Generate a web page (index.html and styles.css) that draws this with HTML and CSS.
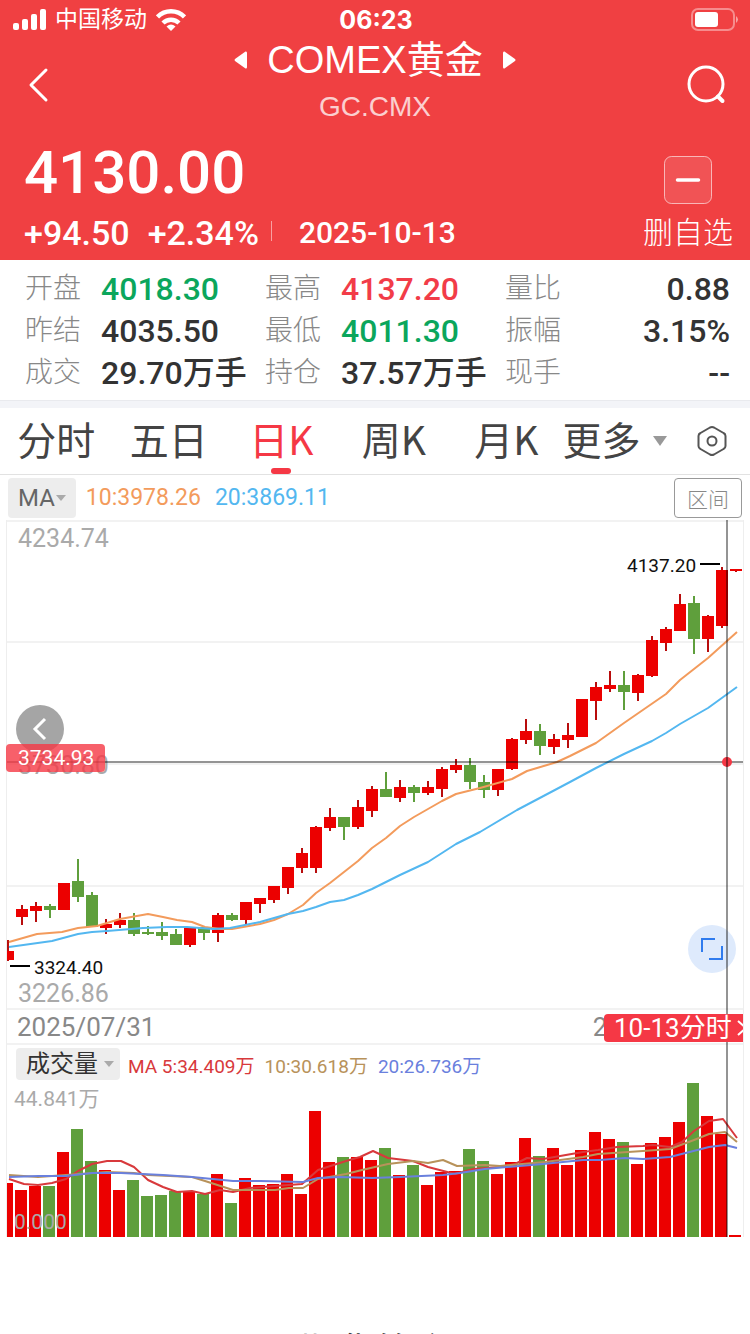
FILE: index.html
```html
<!DOCTYPE html>
<html lang="zh">
<head>
    <meta charset="UTF-8">
    <meta name="viewport" content="width=device-width, initial-scale=1">
    <title>COMEX黄金</title>
    <link rel="stylesheet" href="styles.css">
    <script src="script.js" defer></script>
</head>
<body>
    <header class="header">
        <div class="status">
            <div class="carrier">
                <svg width="33" height="22" viewBox="0 0 33 22" fill="#fff">
                    <rect x="0" y="14" width="6" height="7" rx="2"/>
                    <rect x="9" y="10" width="6" height="11" rx="2"/>
                    <rect x="18" y="5" width="6" height="16" rx="2"/>
                    <rect x="27" y="0" width="6" height="21" rx="2"/>
                </svg>
                <span>中国移动</span>
                <svg width="30" height="22" viewBox="0 0 30 22" fill="none" stroke="#fff" stroke-width="4.500">
                    <path d="M1.500 8a19 19 0 0 1 27 0"/>
                    <path d="M7 14a11.500 11.500 0 0 1 16 0"/>
                    <path d="M10.500 17.500q4.500-4 9 0L15 22z" fill="#fff" stroke="none"/>
                </svg>
            </div>
            <span class="time">06:23</span>
            <svg class="battery" width="48" height="24" viewBox="0 0 48 24">
                <rect x="1" y="1" width="42" height="21" rx="6" fill="none" stroke="#fff" stroke-opacity=".4" stroke-width="2"/>
                <rect x="4" y="4" width="23" height="15" rx="3" fill="#fff"/>
                <path d="M45 8q4 3.500 0 7z" fill="#fff" fill-opacity=".5"/>
            </svg>
        </div>
        <div class="nav">
            <button class="icon-btn" aria-label="返回">
                <svg width="22" height="36" viewBox="0 0 22 36" fill="none" stroke="#fff" stroke-width="3" stroke-linecap="round" stroke-linejoin="round">
                    <path d="M19 3L4 18l15 15"/>
                </svg>
            </button>
            <div class="title">
                <div class="name">
                    <button class="icon-btn" aria-label="上一个">
                        <svg width="14" height="20" viewBox="0 0 14 20" fill="#fff"><path d="M1 9L11.500 1.500Q13 1 13 3v14q0 2-1.500 1.500L1 11q-1-1 0-2z"/></svg>
                    </button>
                    <h1>COMEX黄金</h1>
                    <button class="icon-btn" aria-label="下一个">
                        <svg width="14" height="20" viewBox="0 0 14 20" fill="#fff"><path d="M13 9L2.500 1.500Q1 1 1 3v14q0 2 1.500 1.500L13 11q1-1 0-2z"/></svg>
                    </button>
                </div>
                <p class="code">GC.CMX</p>
            </div>
            <button class="icon-btn search" aria-label="搜索">
                <svg width="40" height="40" viewBox="0 0 40 40" fill="none" stroke="#fff" stroke-width="3" stroke-linecap="round">
                    <circle cx="20" cy="19" r="17"/>
                    <path d="M32 31.500L36.500 36" stroke-width="4"/>
                </svg>
            </button>
        </div>
        <div class="quote">
            <div>
                <div class="price">4130.00</div>
                <div class="change">
                    <span>+94.50</span>
                    <span>+2.34%</span>
                    <time datetime="2025-10-13">2025-10-13</time>
                </div>
            </div>
            <button class="remove">
                <svg width="48" height="48" viewBox="0 0 48 48">
                    <rect x=".5" y=".5" width="47" height="47" rx="7" fill="#fff" fill-opacity=".1" stroke="#fff" stroke-opacity=".6"/>
                    <path d="M13.500 24h21" stroke="#fff" stroke-width="3.500" stroke-linecap="round"/>
                </svg>
                <span>删自选</span>
            </button>
        </div>
    </header>

    <dl class="info">
        <div><dt>开盘</dt><dd class="down">4018.30</dd></div>
        <div><dt>最高</dt><dd class="up">4137.20</dd></div>
        <div><dt>量比</dt><dd>0.88</dd></div>
        <div><dt>昨结</dt><dd>4035.50</dd></div>
        <div><dt>最低</dt><dd class="down">4011.30</dd></div>
        <div><dt>振幅</dt><dd>3.15%</dd></div>
        <div><dt>成交</dt><dd>29.70万手</dd></div>
        <div><dt>持仓</dt><dd>37.57万手</dd></div>
        <div><dt>现手</dt><dd>--</dd></div>
    </dl>

    <nav class="tabs">
        <button class="tab">分时</button>
        <button class="tab">五日</button>
        <button class="tab active">日K</button>
        <button class="tab">周K</button>
        <button class="tab">月K</button>
        <button class="more">更多
            <svg width="14" height="10" viewBox="0 0 14 10" fill="#999"><path d="M0 0h14L7 10z"/></svg>
        </button>
        <button class="icon-btn setting" aria-label="设置">
            <svg width="30" height="32" viewBox="0 0 30 32" fill="none" stroke="#555" stroke-width="2" stroke-linejoin="round">
                <path d="M13 2.500q2-1 4 0l9.500 5.500q2 1 2 3v10q0 2-2 3L17 29.500q-2 1-4 0L3.500 24q-2-1-2-3V11q0-2 2-3z"/>
                <circle cx="15" cy="16" r="4.500"/>
            </svg>
        </button>
    </nav>

    <main>
        <div class="toolbar">
            <button class="select">MA<svg width="10" height="6" viewBox="0 0 10 6" fill="#aaa"><path d="M0 0h10L5 6z"/></svg></button>
            <span class="ma10">10:3978.26</span>
            <span class="ma20">20:3869.11</span>
            <button class="range">区间</button>
        </div>
        <div class="chart">
            <div class="pane">
                <svg id="kline" viewBox="7 520 736 488" role="img" aria-label="日K线">
                    <g stroke="#f2f2f2" stroke-width="2">
                        <path d="M7 521h736M7 642h736M7 764h736M7 886h736"/>
                    </g>
                    <g class="axis">
                        <text x="18" y="547">4234.74</text>
                        <text x="18" y="774">3730.80</text>
                        <text x="18" y="1002">3226.86</text>
                    </g>
                    <g id="candles"></g>
                    <g id="maLines"></g>
                    <path d="M7 762h736" stroke="#000" stroke-opacity=".42" stroke-width="2"/>
                    <path d="M700 564h20M10 966h20" stroke="#000" stroke-width="2"/>
                    <g class="mark">
                        <text x="627" y="572">4137.20</text>
                        <text x="34" y="974">3324.40</text>
                    </g>
                </svg>
                <button class="prev" aria-label="向前">
                    <svg width="48" height="48" viewBox="0 0 48 48" fill="none" stroke="#fff" stroke-width="3"><path d="M29 14L19 24l10 10"/></svg>
                </button>
                <span class="price-tag">3734.93</span>
                <button class="expand" aria-label="全屏">
                    <svg width="48" height="48" viewBox="0 0 48 48" fill="none" stroke="#2f7bee" stroke-width="2"><path d="M27 14H14v13M21 34h13V21"/></svg>
                </button>
            </div>
            <div class="dates">
                <span>2025/07/31</span>
                <span>2025/10/13</span>
                <a class="date-tag" href="#">10-13分时<svg width="12" height="16" viewBox="0 0 12 16" fill="none" stroke="#fff" stroke-width="2"><path d="M1 1l8 7-8 7"/></svg></a>
            </div>
            <div class="vol-head">
                <button class="select">成交量<svg width="10" height="6" viewBox="0 0 10 6" fill="#aaa"><path d="M0 0h10L5 6z"/></svg></button>
                <span class="v5">MA 5:34.409万</span>
                <span class="v10">10:30.618万</span>
                <span class="v20">20:26.736万</span>
            </div>
            <svg id="volume" viewBox="7 1083 736 154" role="img" aria-label="成交量">
                <g id="bars"></g>
                <g id="volLines"></g>
                <g class="axis small">
                    <text x="14" y="1106">44.841万</text>
                    <text x="14" y="1229">0.000</text>
                </g>
            </svg>
            <div class="crosshair"></div>
        </div>
        <h2 class="intro">期货简介</h2>
    </main>
</body>
</html>
```
FILE: styles.css
```css
*{
    box-sizing: border-box;
}
body,h1,h2,p,dl,dd{
    margin: 0;
    padding: 0;
    font-weight: 400;
}
body{
    height: 100vh;
    overflow: hidden;
    background-color: #fff;
    color: #333;
    font-family: Roboto, "Noto Sans CJK SC", sans-serif;
}
button{
    border: 0;
    padding: 0;
    margin: 0;
    background: none;
    color: inherit;
    font: inherit;
    cursor: pointer;
}
svg{
    display: block;
}
/* 顶部 */
.header{
    height: 260px;
    background-color: #f04042;
    color: #fff;
}
.status{
    display: grid;
    grid-template-columns: 1fr auto 1fr;
    align-items: center;
    height: 40px;
    padding: 0 11px 0 13px;
}
.carrier{
    display: flex;
    align-items: center;
    gap: 9px;
    font-size: 23px;
    line-height: 40px;
}
.time{
    font-family: Inter, sans-serif;
    font-size: 25px;
    font-weight: 700;
}
.battery{
    justify-self: end;
}
.nav{
    display: grid;
    grid-template-columns: 100px 1fr 100px;
    align-items: center;
    height: 90px;
}
.nav > .icon-btn{
    padding-left: 27px;
    justify-self: start;
}
.nav > .search{
    padding: 0 24px 0 0;
    justify-self: end;
}
.title{
    padding-bottom: 8px;
}
.name{
    display: flex;
    justify-content: center;
    align-items: center;
    gap: 19px;
}
.name h1{
    font-family: "Liberation Sans", "Noto Sans CJK SC", sans-serif;
    font-size: 38px;
    line-height: 40px;
}
.code{
    margin-top: 12px;
    font-family: "Liberation Sans", sans-serif;
    font-size: 28px;
    line-height: 30px;
    text-align: center;
    opacity: .75;
}
.quote{
    display: flex;
    justify-content: space-between;
    padding: 10px 17px 0 24px;
}
.price{
    font-size: 60px;
    font-weight: 500;
    line-height: 66px;
}
.change{
    display: flex;
    align-items: center;
    gap: 18px;
    margin-top: 7px;
    font-size: 34px;
    font-weight: 500;
    line-height: 40px;
}
.change time{
    position: relative;
    padding-left: 22px;
    font-size: 30px;
}
.change time::before{
    content: "";
    position: absolute;
    left: -6px;
    top: 8px;
    width: 1px;
    height: 20px;
    background-color: rgba(255,255,255,.5);
}
.remove{
    display: flex;
    flex-direction: column;
    align-items: center;
    gap: 9px;
    padding-top: 16px;
    align-self: flex-start;
    font-size: 30px;
    font-weight: 300;
    line-height: 40px;
}
/* 行情数据 */
.info{
    display: grid;
    grid-template-columns: 240fr 240fr 225fr;
    padding: 8px 20px 6px 25px;
    border-bottom: 1px solid #e9eaee;
}
.info div{
    display: flex;
    line-height: 42px;
    height: 42px;
    white-space: nowrap;
}
.info dt{
    flex: 0 0 76px;
    font-size: 28px;
    font-weight: 300;
    color: #888;
}
.info dd{
    font-size: 32px;
    font-weight: 500;
}
.info div:nth-child(3n) dd{
    margin-left: auto;
}
.info .up{
    color: #f23c48;
}
.info .down{
    color: #0ba65c;
}
/* 周期切换 */
.tabs{
    display: flex;
    height: 74px;
    border-top: 7px solid #f3f4f8;
    border-bottom: 1px solid #e2e2e2;
    font-family: "Noto Sans CJK SC", sans-serif;
    font-size: 39px;
    line-height: 60px;
    color: #444;
}
.tab{
    position: relative;
    flex: 0 0 15%;
    padding-bottom: 6px;
}
.active{
    color: #f53845;
}
.active::after{
    content: "";
    position: absolute;
    left: 50%;
    bottom: 0;
    width: 20px;
    height: 6px;
    margin-left: -10px;
    border-radius: 3px;
    background-color: #f53845;
}
.more{
    display: flex;
    align-items: center;
    gap: 12px;
    padding-bottom: 6px;
}
.more svg{
    margin-top: 6px;
}
.setting{
    margin: 0 23px 0 auto;
}
/* K线图 */
.toolbar{
    display: flex;
    align-items: center;
    gap: 14px;
    height: 45px;
    padding: 0 8px;
    font-size: 23px;
}
.select{
    display: flex;
    align-items: center;
    border-radius: 4px;
    background-color: #ededed;
}
.toolbar .select{
    gap: 1px;
    height: 40px;
    padding: 0 10px;
    margin-right: -4px;
    font-size: 24px;
    color: #666;
}
.ma10{
    color: #f39b5c;
}
.ma20{
    color: #53b7f0;
}
.range{
    width: 68px;
    height: 40px;
    margin-left: auto;
    border: 1px solid #999;
    border-radius: 4px;
    font-size: 21px;
    font-weight: 300;
    color: #888;
}
.chart{
    position: relative;
    margin: 0 6px;
    border: 1px solid #eee;
    border-width: 0 1px;
}
.pane{
    position: relative;
}
.chart > svg,.pane > svg{
    width: 100%;
    height: auto;
}
.axis{
    font-size: 25px;
    fill: #aaa;
}
.small{
    font-size: 21px;
}
.mark{
    font-size: 19px;
    fill: #111;
}
.prev,.expand{
    position: absolute;
    width: 48px;
    height: 48px;
    border-radius: 50%;
}
.prev{
    left: 9px;
    top: 38%;
    background-color: #a5a5a5;
}
.expand{
    right: 7px;
    top: 83%;
    background-color: rgba(47,123,238,.16);
}
.price-tag{
    position: absolute;
    left: -1px;
    top: 46%;
    width: 99px;
    padding-left: 12px;
    border-radius: 4px;
    background-color: rgba(245,56,69,.8);
    color: #fff;
    font-size: 21px;
    line-height: 28px;
}
.dates{
    position: relative;
    display: flex;
    justify-content: space-between;
    height: 37px;
    padding: 0 12px 0 10px;
    border-top: 2px solid #f2f2f2;
    border-bottom: 2px solid #f2f2f2;
    overflow: hidden;
    font-size: 26px;
    line-height: 35px;
    color: #888;
}
.date-tag{
    position: absolute;
    right: 0;
    top: 4px;
    z-index: 2;
    display: flex;
    align-items: center;
    gap: 5px;
    width: 139px;
    height: 28px;
    padding-left: 10px;
    overflow: hidden;
    border-radius: 4px 0 0 4px;
    background-color: #f53845;
    color: #fff;
    line-height: 28px;
    white-space: nowrap;
    text-decoration: none;
}
.date-tag svg{
    flex: none;
}
.vol-head{
    display: flex;
    align-items: center;
    gap: 10px;
    height: 38px;
    padding: 0 9px;
    font-size: 19px;
}
.vol-head .select{
    gap: 6px;
    height: 32px;
    padding: 0 6px 0 10px;
    margin-right: -2px;
    font-size: 24px;
    line-height: 32px;
}
.v5{
    color: #d8393c;
}
.v10{
    color: #b8925a;
}
.v20{
    color: #6a80dd;
}
.crosshair{
    position: absolute;
    right: 15px;
    top: 0;
    bottom: 0;
    width: 2px;
    background-color: rgba(0,0,0,.42);
}
.intro{
    margin-top: 87px;
    font-size: 38px;
    line-height: 56px;
    text-align: center;
}
```
FILE: script.js
```js
// 颜色, 最高, 实体上沿, 实体下沿, 最低
var candles = [
    ["r",940,951,960,961],["r",905,909,917,925],["r",902,906,911,922],["g",904,906,910,918],
    ["r",883,883,910,910],["g",859,881,897,902],["g",892,895,927,927],["r",919,924,928,934],
    ["r",913,920,925,928],["g",913,920,934,936],["g",926,932,934,935],["g",922,932,936,940],
    ["g",929,934,945,945],["r",927,928,945,947],["g",927,927,933,940],["r",913,915,933,942],
    ["g",913,915,920,921],["r",902,902,920,924],["r",898,898,904,913],["r",886,886,900,903],
    ["r",867,867,888,894],["r",848,853,868,873],["r",826,827,868,873],["r",808,817,828,831],
    ["g",817,817,827,840],["r",800,807,827,829],["r",786,789,811,817],["g",772,789,797,797],
    ["r",780,787,798,802],["g",785,787,793,802],["r",781,787,793,795],["r",767,769,789,797],
    ["r",759,765,770,773],["g",758,765,782,789],["g",775,782,790,798],["r",769,769,790,796],
    ["r",738,739,769,770],["r",719,731,740,744],["g",724,731,746,755],["r",734,739,747,754],
    ["r",723,735,740,748],["r",699,699,737,737],["r",682,687,701,720],["r",671,685,689,692],
    ["g",671,685,692,710],["r",674,675,693,701],["r",636,640,676,677],["r",627,629,643,651],
    ["r",594,604,631,631],["g",596,603,639,654],["r",615,616,639,652],["r",567,570,626,628],
    ["r",569,569,571,572]
];
// 成交量柱的上沿
var volumes = [
    1183,1190,1186,1186,1152,1129,1161,1170,1190,1180,1196,1195,1191,1191,1194,1174,1203,1178,
    1185,1184,1174,1194,1111,1162,1157,1157,1160,1148,1175,1165,1185,1172,1171,1149,1161,1174,
    1162,1138,1156,1148,1165,1150,1132,1139,1142,1164,1143,1137,1122,1083,1116,1134,1235
];
var ma10 = "9,942 37,934 62,932 78,928 97,926 120,919 148,914 163,917 177,920 192,922 205,927 220,929 232,929 260,924 274,920 288,914 303,905 316,893 330,883 358,861 372,848 386,838 400,826 414,817 428,809 442,801 456,794 480,788 512,779 527,771 557,762 570,756 596,743 624,723 666,694 680,680 694,669 708,658 737,632";
var ma20 = "9,947 52,941 78,934 92,932 107,931 143,928 167,927 187,927 213,929 230,928 260,922 288,914 303,911 316,907 330,902 344,900 358,895 372,889 400,875 428,862 442,853 456,844 480,832 517,810 553,791 570,782 596,768 624,754 652,741 666,733 680,724 708,708 737,687";
var vol5 = "9,1179 24,1184 38,1185 52,1183 66,1179 78,1171 92,1164 107,1161 121,1161 134,1167 148,1180 163,1187 177,1192 192,1191 205,1194 220,1190 233,1192 250,1188 275,1186 302,1184 318,1170 346,1161 360,1157 373,1151 388,1158 413,1161 428,1167 455,1174 473,1169 500,1167 515,1164 527,1158 543,1159 583,1152 598,1150 617,1147 643,1146 653,1145 670,1147 682,1142 694,1131 709,1121 723,1119 737,1138";
var vol10 = "9,1175 38,1177 66,1175 107,1172 134,1173 148,1175 192,1177 205,1181 233,1190 275,1190 289,1188 303,1188 318,1179 346,1174 362,1170 388,1164 413,1161 428,1163 443,1160 457,1166 485,1165 500,1166 545,1162 583,1157 598,1154 643,1151 670,1149 694,1140 709,1134 725,1132 737,1142";
var vol20 = "9,1177 38,1176 66,1176 92,1173 121,1173 163,1175 192,1177 233,1181 260,1181 303,1182 318,1178 340,1177 372,1178 400,1177 443,1175 460,1173 485,1169 543,1164 583,1160 600,1160 625,1158 643,1159 670,1157 709,1147 725,1145 737,1148";

var fill = {r: "#ec0000", g: "#5f9f3c"};
var wick = {r: "#b80d0d", g: "#5f9f3c"};

// 创建一个svg元素并添加到父元素中
function add(parentId, name, attrs){
    var el = document.createElementNS("http://www.w3.org/2000/svg", name);
    for(var key in attrs){
        el.setAttribute(key, attrs[key]);
    }
    document.getElementById(parentId).appendChild(el);
}
function line(parentId, points, color){
    add(parentId, "polyline", {points: points, fill: "none", stroke: color, "stroke-width": 2, "stroke-linejoin": "round"});
}

for(var i=0;i<candles.length;i++){
    var c = candles[i];
    var x = 8 + 14*i;
    add("candles", "rect", {x: x-1, y: c[1], width: 2, height: c[4]-c[1], fill: wick[c[0]]});
    add("candles", "rect", {x: x-6, y: c[2], width: 12, height: c[3]-c[2], fill: fill[c[0]]});
    add("bars", "rect", {x: x-7, y: volumes[i], width: 12, height: 1237-volumes[i], fill: fill[c[0]]});
}
line("maLines", ma10, "#f39b5c");
line("maLines", ma20, "#53b7f0");
line("volLines", vol5, "#d8393c");
line("volLines", vol10, "#b8925a");
line("volLines", vol20, "#6a80dd");
// 十字光标的交点
add("kline", "circle", {cx: 727, cy: 762, r: 5, fill: "#f53845"});
```
